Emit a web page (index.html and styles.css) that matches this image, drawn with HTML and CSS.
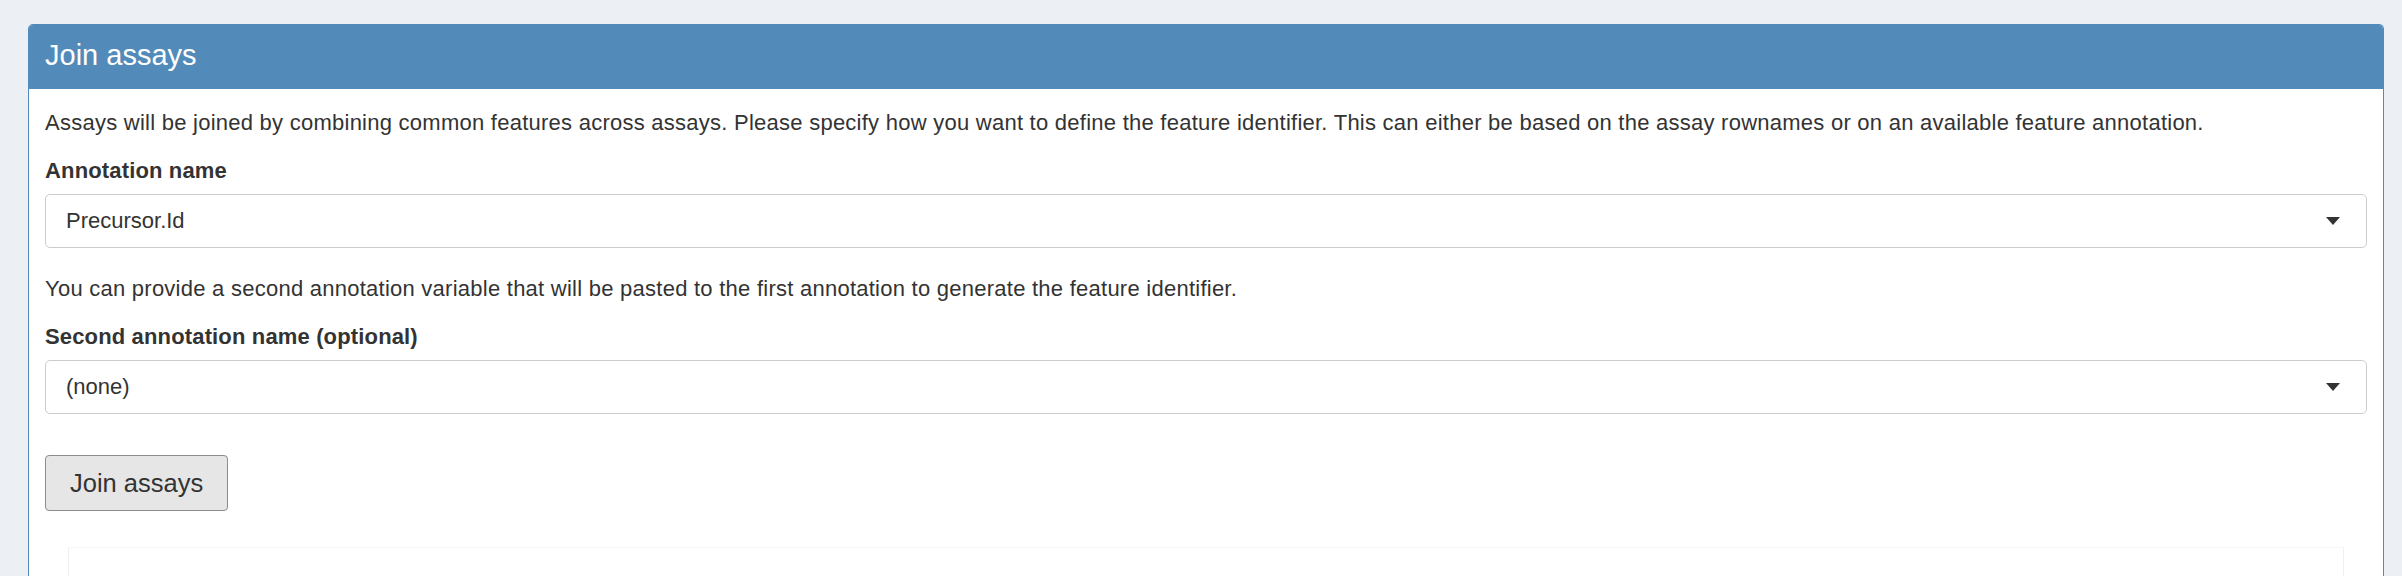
FILE: index.html
```html
<!DOCTYPE html>
<html>
<head>
<meta charset="utf-8">
<link rel="stylesheet" href="styles.css">
</head>
<body>
<div class="panel">
  <div class="panel-heading">Join assays</div>
  <div class="panel-body">
    <p class="help first">Assays will be joined by combining common features across assays. Please specify how you want to define the feature identifier. This can either be based on the assay rownames or on an available feature annotation.</p>
    <label class="label">Annotation name</label>
    <div class="select"><span>Precursor.Id</span><span class="caret"></span></div>
    <p class="help second">You can provide a second annotation variable that will be pasted to the first annotation to generate the feature identifier.</p>
    <label class="label">Second annotation name (optional)</label>
    <div class="select"><span>(none)</span><span class="caret"></span></div>
    <button class="btn">Join assays</button>
    <div class="output-box"></div>
  </div>
</div>
</body>
</html>
```
FILE: styles.css
```css
html, body {
  margin: 0;
  padding: 0;
}
body {
  background: #ecf0f5;
  font-family: "Liberation Sans", Arial, Helvetica, sans-serif;
  color: #333;
  padding: 24px 18px 0 28px;
  height: 576px;
  box-sizing: border-box;
  overflow: hidden;
}
.panel {
  width: 2356px;
  box-sizing: border-box;
  border: 1px solid #528bb9;
  border-bottom: none;
  border-radius: 5px 5px 0 0;
  background: #fff;
}
.panel-heading {
  background: #528bb9;
  color: #fff;
  font-size: 29px;
  height: 64px;
  line-height: 60px;
  padding-left: 16px;
  border-radius: 4px 4px 0 0;
}
.panel-body {
  padding: 19px 16px 0 16px;
  display: flex;
  flex-direction: column;
}
.help {
  margin: 0;
  font-size: 22px;
  letter-spacing: 0.25px;
  line-height: 30px;
  white-space: nowrap;
}
.help.first {
  margin-bottom: 18px;
}
.help.second {
  margin-top: 26px;
  margin-bottom: 18px;
}
.label {
  display: block;
  font-weight: bold;
  font-size: 22px;
  letter-spacing: 0.15px;
  line-height: 30px;
  margin-bottom: 8px;
}
.select {
  display: flex;
  align-items: center;
  justify-content: space-between;
  height: 54px;
  box-sizing: border-box;
  border: 1px solid #cccccc;
  border-radius: 5px;
  padding: 0 26px 0 20px;
  font-size: 22px;
  line-height: 30px;
}
.caret {
  width: 0;
  height: 0;
  border-left: 7.5px solid transparent;
  border-right: 7.5px solid transparent;
  border-top: 8px solid #333;
}
.btn {
  align-self: flex-start;
  margin-top: 41px;
  height: 56px;
  box-sizing: border-box;
  padding: 0 24px;
  font-family: "Liberation Sans", Arial, Helvetica, sans-serif;
  font-size: 25.5px;
  color: #333;
  background: #e6e6e6;
  border: 1px solid #8c8c8c;
  border-radius: 4px;
}
.output-box {
  margin: 36px 23px 0 23px;
  height: 100px;
  border-left: 1px solid #f0f0f0;
  border-right: 1px solid #f0f0f0;
  border-top: 1px solid #f7f7f7;
}
```
